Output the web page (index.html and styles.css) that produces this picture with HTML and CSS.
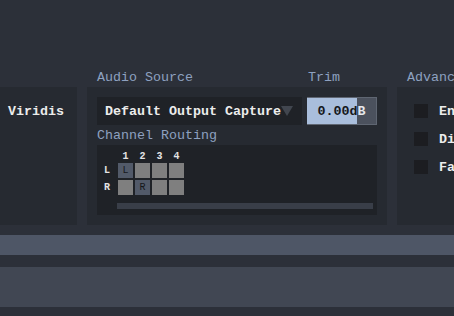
FILE: index.html
```html
<!DOCTYPE html>
<html lang="en">
<head>
    <meta charset="UTF-8">
    <meta name="viewport" content="width=device-width, initial-scale=1.0">
    <title>Audio Settings</title>
    <link rel="stylesheet" href="styles.css">
</head>
<body>
    <div class="sections">
        <div class="section sec-theme">
            <div class="heading">&nbsp;</div>
            <div class="panel theme-panel">
                <span class="value">Viridis</span>
            </div>
        </div>

        <div class="section sec-audio">
            <div class="heading-row">
                <div class="heading">Audio Source</div>
                <div class="heading trim-heading">Trim</div>
            </div>
            <div class="panel audio-panel">
                <div class="source-row">
                    <div class="dropdown">
                        <span class="value">Default Output Capture</span>
                        <span class="arrow"></span>
                    </div>
                    <div class="trim">
                        <span class="trim-dark">0.00d</span><span class="trim-light">B</span>
                    </div>
                </div>
                <div class="heading sub">Channel Routing</div>
                <div class="routing">
                    <div class="grid">
                        <span></span>
                        <span class="num">1</span>
                        <span class="num">2</span>
                        <span class="num">3</span>
                        <span class="num">4</span>

                        <span class="ch">L</span>
                        <span class="cell on">L</span>
                        <span class="cell"></span>
                        <span class="cell"></span>
                        <span class="cell"></span>

                        <span class="ch">R</span>
                        <span class="cell"></span>
                        <span class="cell on">R</span>
                        <span class="cell"></span>
                        <span class="cell"></span>
                    </div>
                    <div class="scrollbar"></div>
                </div>
            </div>
        </div>

        <div class="section sec-adv">
            <div class="heading">Advanced</div>
            <div class="panel adv-panel">
                <label class="check"><span class="box"></span><span class="value">Enable</span></label>
                <label class="check"><span class="box"></span><span class="value">Dither</span></label>
                <label class="check"><span class="box"></span><span class="value">Fade</span></label>
            </div>
        </div>
    </div>

    <div class="band band-top"></div>
    <div class="band band-bottom"></div>
</body>
</html>
```

FILE: styles.css
```css
html, body {
    margin: 0;
    height: 100%;
    overflow: hidden;
}
body {
    background-color: #2c3039;
    font-family: "Liberation Mono", "DejaVu Sans Mono", monospace;
    font-size: 13.33px;
    color: #ececec;
}
.sections {
    display: flex;
    gap: 10px;
    padding-top: 70px;
    width: 520px;
}
.section {
    display: flex;
    flex-direction: column;
}
.sec-theme {
    width: 77px;
}
.sec-audio {
    width: 300px;
}
.sec-adv {
    width: 120px;
}
.heading-row {
    display: flex;
}
.heading {
    height: 17px;
    line-height: 16px;
    color: #8ea1c0;
    white-space: nowrap;
}
.sec-audio .heading-row .heading:first-child {
    padding-left: 10px;
    width: 211px;
}
.sec-adv > .heading {
    padding-left: 10px;
}
.panel {
    background-color: #262a31;
    height: 138px;
    box-sizing: border-box;
}
.value {
    font-weight: bold;
    white-space: nowrap;
}
.theme-panel {
    padding: 17px 0 0 8px;
}
.audio-panel {
    padding: 10px;
}
.source-row {
    display: flex;
    gap: 5px;
    height: 28px;
}
.dropdown {
    width: 205px;
    background-color: #1f2227;
    display: flex;
    align-items: center;
    padding-left: 8px;
    box-sizing: border-box;
}
.arrow {
    width: 0;
    height: 0;
    border-left: 6px solid transparent;
    border-right: 6px solid transparent;
    border-top: 10px solid #41464f;
    margin-left: 0;
}
.trim {
    width: 70px;
    background: linear-gradient(to right, #a9bedc 0, #a9bedc 50px, #4b515d 50px);
    border: 1px solid #5f6672;
    border-left: none;
    box-sizing: border-box;
    display: flex;
    align-items: center;
    justify-content: center;
    font-weight: bold;
}
.trim-dark {
    color: #15171b;
}
.trim-light {
    color: #e6e8ec;
}
.sub {
    margin-top: 3px;
    height: 17px;
}
.routing {
    background-color: #1f2227;
    height: 70px;
    padding: 7px 4px 0 7px;
    box-sizing: border-box;
}
.grid {
    display: grid;
    grid-template-columns: 12px repeat(4, 15px);
    grid-template-rows: 9px 15px 15px;
    gap: 2px;
}
.num {
    font-size: 10px;
    line-height: 9px;
    font-weight: bold;
    text-align: center;
    color: #e4e4e4;
}
.ch {
    font-size: 10px;
    font-weight: bold;
    line-height: 15px;
    color: #e4e4e4;
}
.cell {
    background-color: #7f7f7f;
    font-size: 10px;
    line-height: 15px;
    text-align: center;
    color: #15171b;
}
.cell.on {
    background-color: #525a69;
}
.scrollbar {
    margin: 8px 0 0 13px;
    height: 6px;
    background-color: #393e48;
}
.adv-panel {
    padding: 17px 0 0 17px;
    display: flex;
    flex-direction: column;
    gap: 14px;
}
.check {
    display: flex;
    align-items: center;
    gap: 11px;
    height: 14px;
}
.box {
    width: 14px;
    height: 14px;
    background-color: #1c1d21;
    flex: none;
}
.band {
    height: 20px;
    background-color: #4e5666;
    margin-top: 10px;
}
.band-bottom {
    height: 40px;
    margin-top: 12px;
    background-color: #414753;
}
```
